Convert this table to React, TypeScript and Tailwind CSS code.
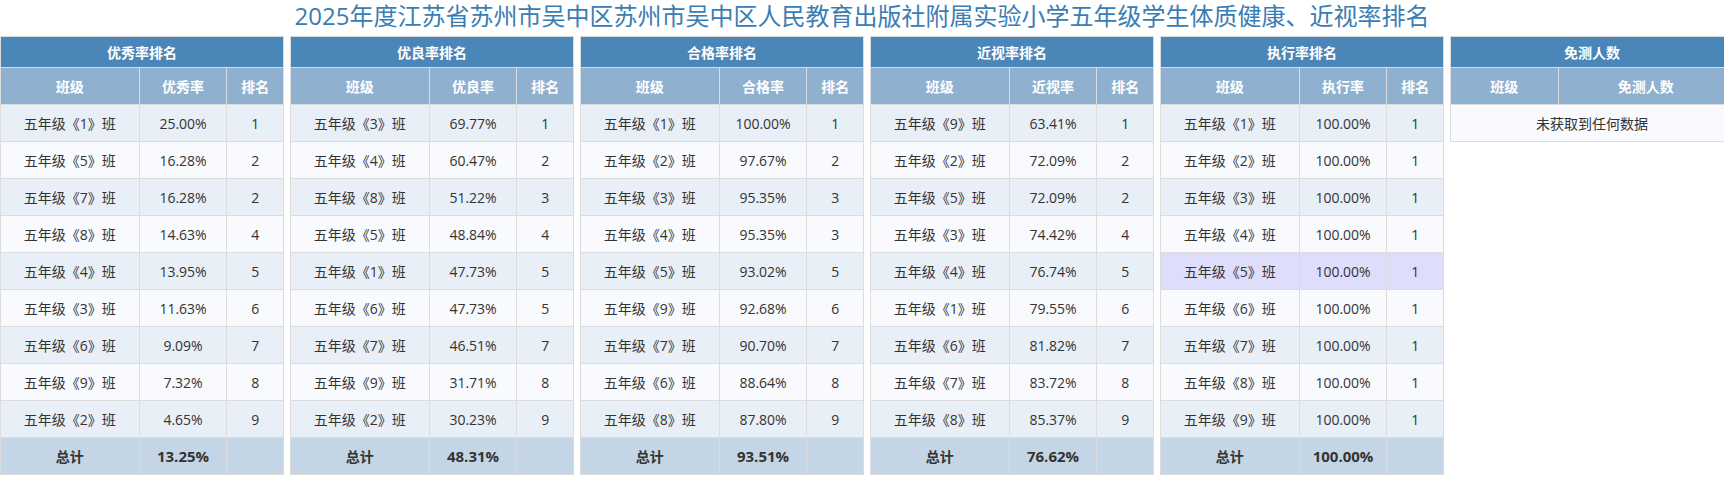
import React from "react";

type Row = { cls: string; val: string; rank: string; hl?: boolean };

const tables: { title: string; col: string; rows: Row[]; total: string }[] = [
  {
    title: "优秀率排名",
    col: "优秀率",
    total: "13.25%",
    rows: [
      { cls: "1", val: "25.00%", rank: "1" },
      { cls: "5", val: "16.28%", rank: "2" },
      { cls: "7", val: "16.28%", rank: "2" },
      { cls: "8", val: "14.63%", rank: "4" },
      { cls: "4", val: "13.95%", rank: "5" },
      { cls: "3", val: "11.63%", rank: "6" },
      { cls: "6", val: "9.09%", rank: "7" },
      { cls: "9", val: "7.32%", rank: "8" },
      { cls: "2", val: "4.65%", rank: "9" },
    ],
  },
  {
    title: "优良率排名",
    col: "优良率",
    total: "48.31%",
    rows: [
      { cls: "3", val: "69.77%", rank: "1" },
      { cls: "4", val: "60.47%", rank: "2" },
      { cls: "8", val: "51.22%", rank: "3" },
      { cls: "5", val: "48.84%", rank: "4" },
      { cls: "1", val: "47.73%", rank: "5" },
      { cls: "6", val: "47.73%", rank: "5" },
      { cls: "7", val: "46.51%", rank: "7" },
      { cls: "9", val: "31.71%", rank: "8" },
      { cls: "2", val: "30.23%", rank: "9" },
    ],
  },
  {
    title: "合格率排名",
    col: "合格率",
    total: "93.51%",
    rows: [
      { cls: "1", val: "100.00%", rank: "1" },
      { cls: "2", val: "97.67%", rank: "2" },
      { cls: "3", val: "95.35%", rank: "3" },
      { cls: "4", val: "95.35%", rank: "3" },
      { cls: "5", val: "93.02%", rank: "5" },
      { cls: "9", val: "92.68%", rank: "6" },
      { cls: "7", val: "90.70%", rank: "7" },
      { cls: "6", val: "88.64%", rank: "8" },
      { cls: "8", val: "87.80%", rank: "9" },
    ],
  },
  {
    title: "近视率排名",
    col: "近视率",
    total: "76.62%",
    rows: [
      { cls: "9", val: "63.41%", rank: "1" },
      { cls: "2", val: "72.09%", rank: "2" },
      { cls: "5", val: "72.09%", rank: "2" },
      { cls: "3", val: "74.42%", rank: "4" },
      { cls: "4", val: "76.74%", rank: "5" },
      { cls: "1", val: "79.55%", rank: "6" },
      { cls: "6", val: "81.82%", rank: "7" },
      { cls: "7", val: "83.72%", rank: "8" },
      { cls: "8", val: "85.37%", rank: "9" },
    ],
  },
  {
    title: "执行率排名",
    col: "执行率",
    total: "100.00%",
    rows: ["1", "2", "3", "4", "5", "6", "7", "8", "9"].map((c) => ({
      cls: c,
      val: "100.00%",
      rank: "1",
      hl: c === "5",
    })),
  },
];

function RankTable({ t }: { t: (typeof tables)[number] }) {
  return (
    <table className="w-[284px] shrink-0 table-fixed border-collapse border border-[#dcdcdc] text-center text-[14px]">
      <colgroup>
        <col className="w-[49%]" />
        <col className="w-[31%]" />
        <col className="w-[20%]" />
      </colgroup>
      <thead>
        <tr className="h-[31px] bg-[#4a86b8] text-white font-bold">
          <th colSpan={3} className="border border-[#dcdcdc]">
            {t.title}
          </th>
        </tr>
        <tr className="h-[37px] bg-[#8fb1cf] text-white font-bold">
          <th className="border border-[#dcdcdc]">班级</th>
          <th className="border border-[#dcdcdc]">{t.col}</th>
          <th className="border border-[#dcdcdc]">排名</th>
        </tr>
      </thead>
      <tbody className="text-[#333]">
        {t.rows.map((r, i) => (
          <tr
            key={i}
            className={
              "h-[37px] " +
              (r.hl ? "bg-[#dfddfc]" : i % 2 === 0 ? "bg-[#e8eff7]" : "bg-[#f8fafe]")
            }
          >
            <td className="border border-[#dcdcdc]">五年级《{r.cls}》班</td>
            <td className="border border-[#dcdcdc]">{r.val}</td>
            <td className="border border-[#dcdcdc]">{r.rank}</td>
          </tr>
        ))}
        <tr className="h-[37px] bg-[#c4d6e5] font-bold">
          <td className="border border-[#dcdcdc]">总计</td>
          <td className="border border-[#dcdcdc] text-[15px]">{t.total}</td>
          <td className="border border-[#dcdcdc]"></td>
        </tr>
      </tbody>
    </table>
  );
}

export default function App() {
  return (
    <div
      className="w-[1724px] h-[491px] overflow-hidden bg-white"
      style={{ fontFamily: '"Open Sans", "Noto Sans CJK SC", sans-serif' }}
    >
      <h1 className="h-[36px] text-center text-[24px] leading-[32px] text-[#3a7db5]">
        2025年度江苏省苏州市吴中区苏州市吴中区人民教育出版社附属实验小学五年级学生体质健康、近视率排名
      </h1>
      <div className="flex items-start gap-[6px]">
        {tables.map((t) => (
          <RankTable key={t.title} t={t} />
        ))}
        <table className="w-[284px] shrink-0 table-fixed border-collapse border border-[#dcdcdc] text-center text-[14px]">
          <colgroup>
            <col className="w-[38%]" />
            <col className="w-[62%]" />
          </colgroup>
          <thead>
            <tr className="h-[31px] bg-[#4a86b8] text-white font-bold">
              <th colSpan={2} className="border border-[#dcdcdc]">
                免测人数
              </th>
            </tr>
            <tr className="h-[37px] bg-[#8fb1cf] text-white font-bold">
              <th className="border border-[#dcdcdc]">班级</th>
              <th className="border border-[#dcdcdc]">免测人数</th>
            </tr>
          </thead>
          <tbody className="text-[#333]">
            <tr className="h-[37px] bg-[#f8fafe]">
              <td colSpan={2} className="border border-[#dcdcdc]">
                未获取到任何数据
              </td>
            </tr>
          </tbody>
        </table>
      </div>
    </div>
  );
}
